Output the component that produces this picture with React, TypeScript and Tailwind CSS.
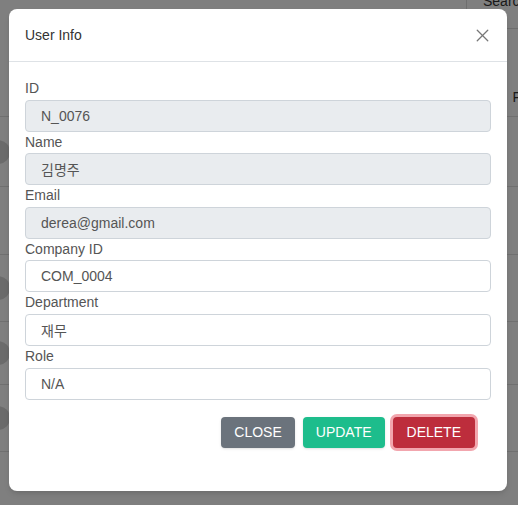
import { X } from 'lucide-react';

const fields = [
  { label: 'ID', value: 'N_0076', disabled: true },
  { label: 'Name', value: '김명주', disabled: true },
  { label: 'Email', value: 'derea@gmail.com', disabled: true },
  { label: 'Company ID', value: 'COM_0004', disabled: false },
  { label: 'Department', value: '재무', disabled: false },
  { label: 'Role', value: 'N/A', disabled: false },
];

const rows = [
  { h: 'h-[88px]', avatar: false, head: true },
  { h: 'h-[70px]', avatar: true, head: false },
  { h: 'h-[68px]', avatar: false, head: false },
  { h: 'h-[67px]', avatar: true, head: false },
  { h: 'h-[63px]', avatar: true, head: false },
  { h: 'h-[67px]', avatar: true, head: false },
];

export default function App() {
  return (
    <div
      className="relative h-[505px] w-[518px] overflow-hidden bg-white"
      style={{ fontFamily: '"Liberation Sans", Arial, "Noto Sans CJK KR", sans-serif' }}
    >
      {/* page behind the dialog */}
      <div className="flex h-[29px] justify-end">
        <div className="w-[52px] overflow-hidden whitespace-nowrap border-b border-l border-[#dcdcdc] pl-[16px] text-sm leading-[12px] text-[#333]">
          <span className="-mt-[5px] block">Search</span>
        </div>
      </div>
      <div className="flex flex-col">
        {rows.map((r, i) => (
          <div key={i} className={`${r.h} flex items-center justify-between border-b border-[#e0e0e0]`}>
            {r.avatar ? <div className="-ml-[14px] h-[24px] w-[24px] rounded-full bg-[#d6d6d6]" /> : <div />}
            {r.head ? <span className="mr-[-3px] mt-[48px] text-sm text-[#333]">F</span> : <div />}
          </div>
        ))}
      </div>

      {/* backdrop + dialog */}
      <div className="absolute inset-0 bg-black/50 p-[9px]">
        <div className="w-[498px] rounded-lg bg-white shadow-md">
          <div className="flex h-[53px] items-center justify-between border-b border-[#dee2e6] px-4">
            <h2 className="text-sm text-[#333]">User Info</h2>
            <X className="h-[21px] w-[21px] text-[#777] -mr-[2px]" strokeWidth={1.5} />
          </div>
          <div className="px-4 pt-4">
            {fields.map((f) => (
              <div key={f.label}>
                <label className="block text-sm leading-[20px] pb-[1.6px] text-[#555]">{f.label}</label>
                <input
                  readOnly
                  value={f.value}
                  className={`block h-8 w-full rounded border border-[#ced4da] px-[15px] text-sm text-[#555] outline-none ${
                    f.disabled ? 'bg-[#e9ecef]' : 'bg-white'
                  }`}
                  style={{ fontFamily: '"Liberation Sans", Arial, "Noto Sans CJK KR", sans-serif' }}
                />
              </div>
            ))}
            <div className="mt-[17px] flex justify-end gap-2 pb-[43px] pr-4">
              <button className="h-[31px] rounded bg-[#6b737c] px-[13px] text-sm text-white uppercase shadow-sm">
                Close
              </button>
              <button className="h-[31px] rounded bg-[#1dbd8c] px-[13px] text-sm text-white uppercase shadow-sm">
                Update
              </button>
              <button className="h-[31px] rounded bg-[#bd2d3c] px-[14px] text-sm text-white uppercase ring-[3px] ring-[#f2a6ae]">
                Delete
              </button>
            </div>
          </div>
        </div>
      </div>
    </div>
  );
}
